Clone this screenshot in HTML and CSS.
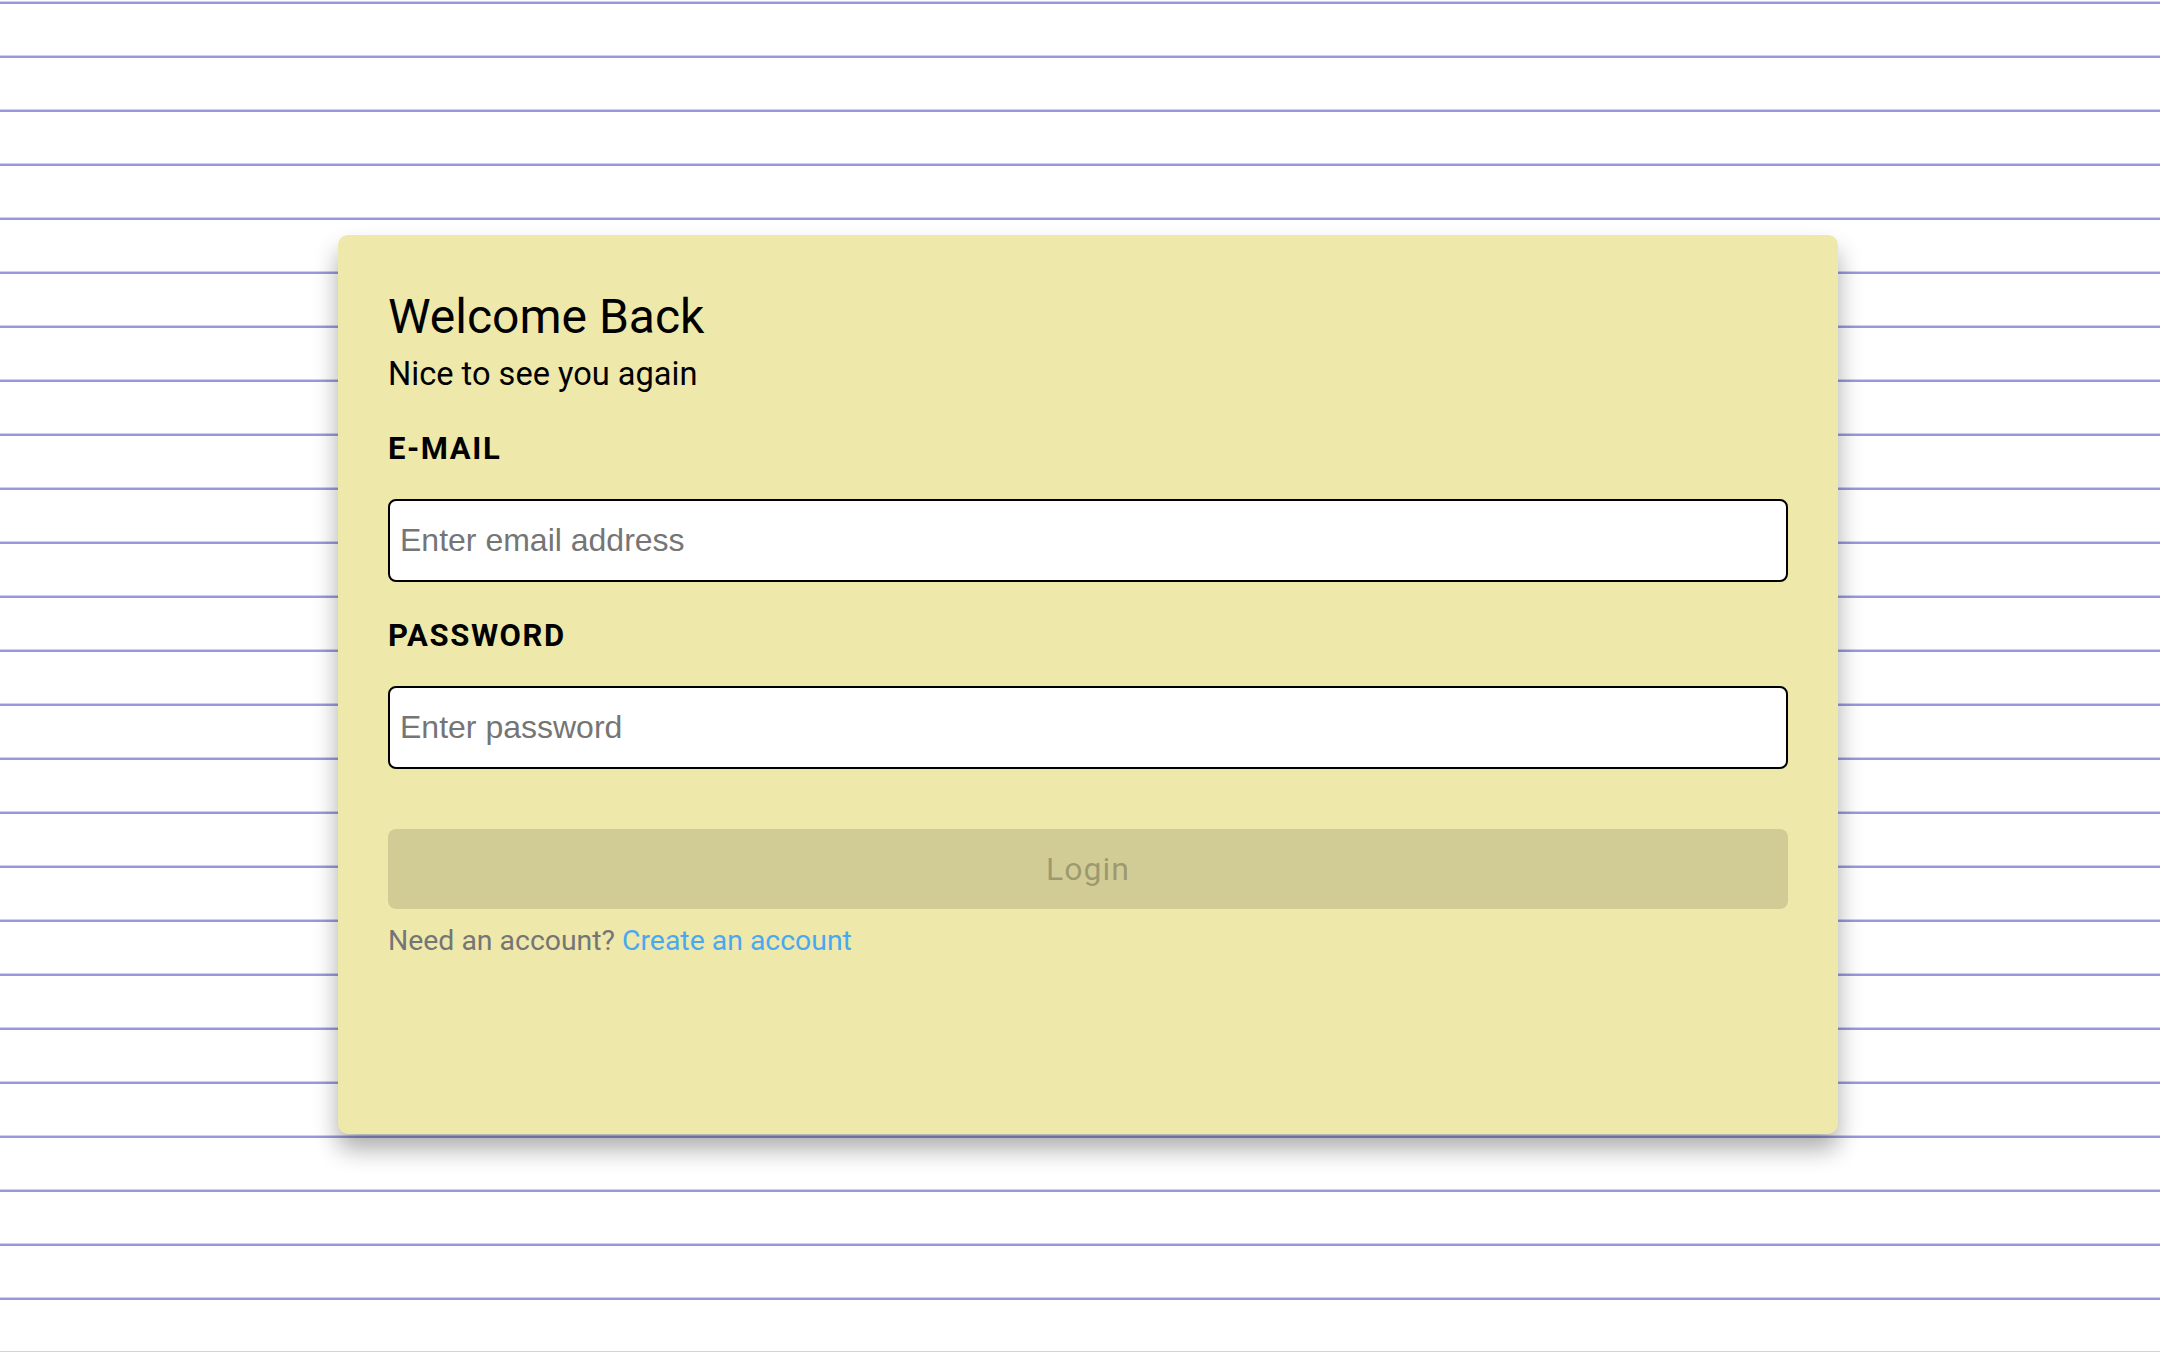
FILE: index.html
```html
<!DOCTYPE html>
<html lang="en">
<head>
<meta charset="utf-8">
<title>Login</title>
<link rel="stylesheet" href="styles.css">
</head>
<body>
<main class="page">
  <form class="card">
    <h1 class="title">Welcome Back</h1>
    <p class="subtitle">Nice to see you again</p>
    <label class="label label-email" for="email">E-MAIL</label>
    <input class="field" id="email" type="email" placeholder="Enter email address">
    <label class="label label-password" for="password">PASSWORD</label>
    <input class="field" id="password" type="password" placeholder="Enter password">
    <button class="login" type="button" disabled>Login</button>
    <p class="footer">Need an account? <a class="link" href="#">Create an account</a></p>
  </form>
</main>
</body>
</html>
```

FILE: styles.css
```css
html {
  background-color: #ffffff;
  background-image: linear-gradient(to bottom,
    #ffffff 0, #ffffff 1px,
    #cfcfef 1px, #cfcfef 2px,
    #9898dc 2px, #9898dc 4px,
    #ffffff 4px, #ffffff 54px);
  background-size: 100% 54px;
  background-repeat: repeat;
}

body {
  margin: 0;
  min-height: 1352px;
  font-family: Roboto, "Liberation Sans", Arial, sans-serif;
}

.page {
  display: flex;
  padding: 235px 0 0 338px;
}

.card {
  box-sizing: border-box;
  width: 1500px;
  height: 899px;
  padding: 53px 50px 0 50px;
  background: #eee8aa;
  border-radius: 10px;
  box-shadow: 0 15px 25px rgba(0, 0, 0, 0.33);
  display: flex;
  flex-direction: column;
}

.title {
  margin: 0;
  font-size: 48px;
  line-height: 58px;
  font-weight: 400;
  color: #000;
}

.subtitle {
  margin: 9px 0 0 0;
  font-size: 32.6px;
  line-height: 38px;
  color: #000;
}

.label {
  font-size: 31px;
  line-height: 36px;
  font-weight: 700;
  letter-spacing: 1.6px;
  color: #000;
}

.label-email {
  margin-top: 38px;
}

.label-password {
  margin-top: 36px;
}

.field {
  box-sizing: border-box;
  display: block;
  width: 100%;
  height: 83px;
  margin: 32px 0 0 0;
  padding: 0 10px;
  border: 2px solid #000;
  border-radius: 8px;
  background: #fff;
  font-family: "Liberation Sans", Arial, sans-serif;
  font-size: 32px;
  color: #000;
  outline: none;
}

.field::placeholder {
  color: #757575;
  opacity: 1;
}

.login {
  display: flex;
  align-items: center;
  justify-content: center;
  width: 100%;
  height: 80px;
  margin-top: 60px;
  padding: 0;
  border: 0;
  border-radius: 8px;
  background: rgba(0, 0, 0, 0.12);
  color: rgba(0, 0, 0, 0.26);
  font-family: Roboto, "Liberation Sans", Arial, sans-serif;
  font-size: 32px;
  line-height: 38px;
  font-weight: 400;
  letter-spacing: 1px;
}

.footer {
  margin: 15px 0 0 0;
  font-size: 28.4px;
  line-height: 33px;
  color: #757575;
}

.link {
  color: #4aa8f0;
  text-decoration: none;
}
```
